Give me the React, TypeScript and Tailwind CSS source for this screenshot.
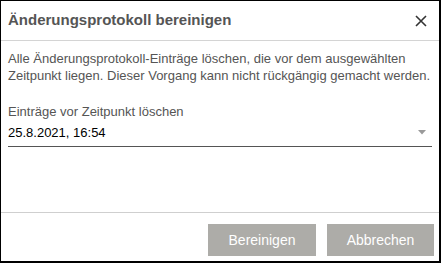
import React from "react";

export default function App() {
  return (
    <div className="w-[442px] h-[264px] bg-white" style={{ fontFamily: '"Liberation Sans", Arial, sans-serif' }}>
      <div className="w-[441px] h-[263px] border-l border-t border-r-2 border-b-2 border-black flex flex-col">
        <div className="h-[40px] shrink-0 flex items-center justify-between pl-[7px] pr-[12px] border-b border-[#d4d4d4]">
          <span className="text-[15px] font-bold text-[#555555]">Änderungsprotokoll bereinigen</span>
          <svg width="12" height="12" viewBox="0 0 12 12">
            <path d="M1 1 L11 11 M11 1 L1 11" stroke="#333" strokeWidth="1.6" />
          </svg>
        </div>
        <div className="flex-1 px-[7px] pt-[9px]">
          <p className="text-[13px] leading-[17px] text-[#555555]">
            Alle Änderungsprotokoll-Einträge löschen, die vor dem ausgewählten Zeitpunkt liegen. Dieser Vorgang kann nicht rückgängig gemacht werden.
          </p>
          <div className="mt-[19px] text-[13px] leading-[17px] text-[#555555]">Einträge vor Zeitpunkt löschen</div>
          <div className="mt-[3px] h-[24px] flex items-center justify-between border-b border-[#555555] pb-[4px] pr-[6px]">
            <span className="text-[13px] text-black">25.8.2021, 16:54</span>
            <svg width="8" height="5" viewBox="0 0 8 5">
              <path d="M0 0 L8 0 L4 4.5 Z" fill="#9a9a9a" />
            </svg>
          </div>
        </div>
        <div className="h-[49px] shrink-0 border-t border-[#cfcfcf] flex items-start justify-end gap-[11px] pt-[11px] pr-[5px]">
          <button className="w-[108px] h-[32px] bg-[#adaca8] text-white text-[14px]">Bereinigen</button>
          <button className="w-[107px] h-[32px] bg-[#adaca8] text-white text-[14px]">Abbrechen</button>
        </div>
      </div>
    </div>
  );
}
